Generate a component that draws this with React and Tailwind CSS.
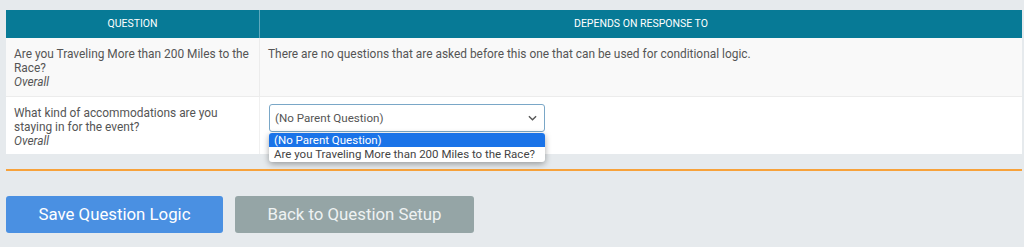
export default function App() {
  return (
    <div className="w-[1024px] h-[247px] bg-[#e6eaed] pt-[10px] pl-[6px] pr-[2px] overflow-hidden" style={{ fontFamily: 'Roboto, "Liberation Sans", sans-serif' }}>
      <div className="w-[1016px]">
        <div className="grid grid-cols-[254px_1fr] bg-[#077a96] text-white text-[10.5px] h-[28px]">
          <div className="flex items-center justify-center border-r border-[#5fa9bd]">QUESTION</div>
          <div className="flex items-center justify-center">DEPENDS ON RESPONSE TO</div>
        </div>
        <div className="grid grid-cols-[254px_1fr] bg-[#f9f9f9] text-[11.9px] leading-[14px] text-[#555] h-[59px] border-b border-[#ececec]">
          <div className="pl-[8px] pr-[2px] pt-[9px] border-r border-[#ececec]">
            <div>Are you Traveling More than 200 Miles to the Race?</div>
            <div className="italic">Overall</div>
          </div>
          <div className="px-[8px] pt-[9px]">There are no questions that are asked before this one that can be used for conditional logic.</div>
        </div>
        <div className="grid grid-cols-[254px_1fr] bg-white text-[11.9px] leading-[14px] text-[#555] h-[57px]">
          <div className="pl-[8px] pr-[2px] pt-[9px] border-r border-[#f0f0f0]">
            <div>What kind of accommodations are you staying in for the event?</div>
            <div className="italic">Overall</div>
          </div>
          <div className="pl-[9px] pt-[7px] relative">
            <div className="w-[276px] h-[28px] border border-[#7aa7c7] rounded-[3px] bg-white flex items-center justify-between pl-[5px] pr-[7px] text-[11.6px] text-[#555]">
              <span>(No Parent Question)</span>
              <svg width="9" height="6" viewBox="0 0 10 6"><path d="M1 1l4 4 4-4" fill="none" stroke="#555" strokeWidth="1.5" /></svg>
            </div>
            <div className="absolute left-[9px] top-[36px] w-[276px] bg-white rounded-[3px] shadow-[0_2px_6px_rgba(0,0,0,0.35)] text-[11.5px] leading-[13px] z-10 pb-[1px] overflow-hidden whitespace-nowrap">
              <div className="bg-[#1a73e8] text-white px-[5px] py-[0.5px]">(No Parent Question)</div>
              <div className="text-[#444] px-[5px] py-[0.5px]">Are you Traveling More than 200 Miles to the Race?</div>
            </div>
          </div>
        </div>
        <div className="mt-[15px] h-[2px] bg-[#f7a23b]" />
        <div className="flex gap-[12px] mt-[25px]">
          <button className="w-[217px] h-[37px] bg-[#4a90e2] text-white text-[16.8px] rounded-[3px]">Save Question Logic</button>
          <button className="w-[239px] h-[37px] bg-[#95a5a6] text-[#eef2f2] text-[16.8px] rounded-[3px]">Back to Question Setup</button>
        </div>
      </div>
    </div>
  );
}
